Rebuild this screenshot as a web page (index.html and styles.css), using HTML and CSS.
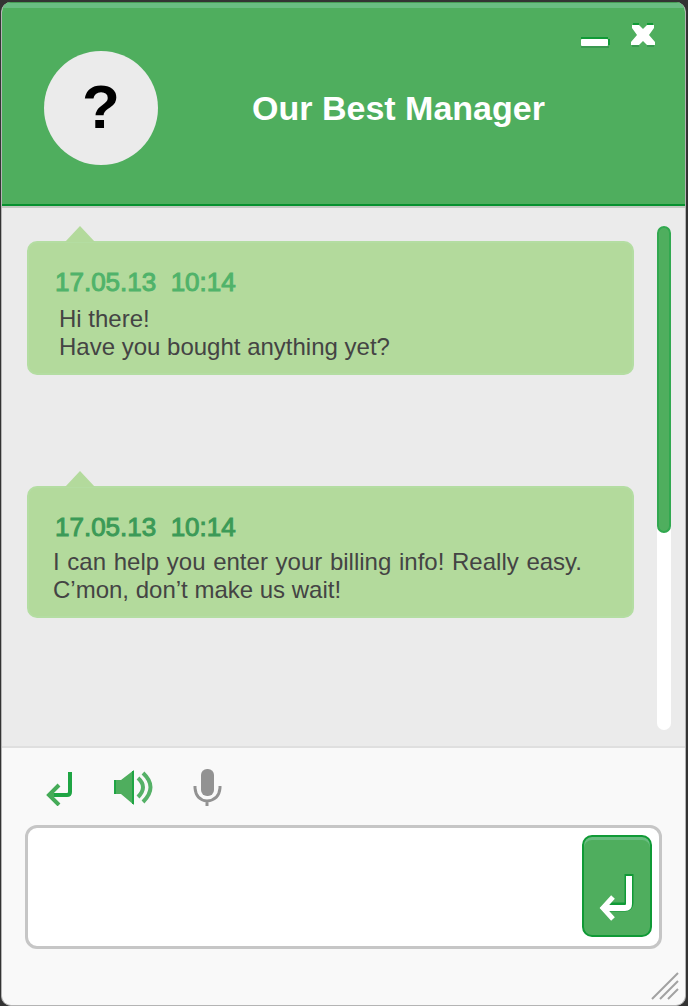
FILE: index.html
```html
<!doctype html>
<html lang="en">
  <head>
    <meta charset="UTF-8" />
    <meta name="viewport" content="width=device-width, initial-scale=1.0" />
    <title>Our Best Manager</title>
    <link rel="stylesheet" href="styles.css">
  </head>
  <body>
    <div class="chat-window">
      <header class="chat-header">
        <div class="window-controls">
          <button type="button" aria-label="Minimize">
            <svg width="32" height="26" viewBox="0 0 32 26">
              <path d="M1 17h27M29 18v6" fill="none" stroke="#109a36" stroke-width="2" />
              <path d="M1 26h28" stroke="#3a9950" stroke-width="2" />
              <rect x="1" y="18" width="27" height="7" rx="1" fill="#fff" />
            </svg>
          </button>
          <button type="button" aria-label="Close">
            <svg width="26" height="26" viewBox="0 0 26 26">
              <path d="M3 3h6M17 3h6" stroke="#109a36" stroke-width="2" />
              <path d="M2 25h7M17 25h7" stroke="#3a9950" stroke-width="2" />
              <path d="M2 4h7l4 4 4-4h7v3l-5 7 6 7v3h-8l-4-4-4 4H1v-3l6-7-5-7z" fill="#fff" />
            </svg>
          </button>
        </div>
        <div class="avatar">?</div>
        <h1>Our Best Manager</h1>
      </header>

      <main class="chat-body">
        <div class="chat-messages">
          <article class="message">
            <time class="message-time" datetime="2013-05-17T10:14">17.05.13  10:14</time>
            <p class="message-text">Hi there!<br>Have you bought anything yet?</p>
          </article>
          <article class="message read">
            <time class="message-time" datetime="2013-05-17T10:14">17.05.13  10:14</time>
            <p class="message-text">I can help you enter your billing info! Really easy. C’mon, don’t make us wait!</p>
          </article>
        </div>
        <div class="scroll-track">
          <div class="scroll-thumb"></div>
        </div>
      </main>

      <footer class="chat-footer">
        <div class="toolbar">
          <button type="button" aria-label="New line">
            <svg width="28" height="38" viewBox="0 0 28 38">
              <path d="M24 4v20q0 3-3 3H6" fill="none" stroke="#1fa544" stroke-width="4" />
              <path d="M13 17L3 27l10 10" fill="none" stroke="#45ab58" stroke-width="4" />
              <path d="M1 27l7-6v12z" fill="#45ab58" />
            </svg>
          </button>
          <button type="button" aria-label="Sound">
            <svg width="40" height="38" viewBox="0 0 40 38">
              <path d="M1 12h7L21 2v35L8 26H1z" fill="#4fae5e" />
              <path d="M2 12v14M20 3v33" fill="none" stroke="#1fa544" stroke-width="2" />
              <path d="M25 10q10 9 0 19M30 5q15 14 0 29" fill="none" stroke="#55b167" stroke-width="4" />
            </svg>
          </button>
          <button type="button" aria-label="Microphone">
            <svg width="30" height="38" viewBox="0 0 30 38">
              <rect x="9" y="1" width="13" height="27" rx="6" fill="#929292" />
              <path d="M3 18v2q1 12 12 13q12-1 13-13v-2M15 33v5" fill="none" stroke="#929292" stroke-width="3" />
            </svg>
          </button>
        </div>
        <form class="input-form">
          <textarea aria-label="Message"></textarea>
          <button type="submit" class="send" aria-label="Send">
            <svg width="36" height="48" viewBox="0 0 36 48">
              <path d="M30 1v29q0 4-4 4H8" fill="none" stroke="#109a36" stroke-width="9" />
              <path d="M30 3v28q0 4-4 4H6" fill="none" stroke="#fff" stroke-width="6" />
              <path d="M14 24L4 35l10 11" fill="none" stroke="#fff" stroke-width="5" />
              <path d="M1 35l8-7v14z" fill="#fff" />
            </svg>
          </button>
        </form>
        <svg class="resize-grip" width="28" height="28" viewBox="0 0 28 28">
          <path d="M1 27L27 1M9 27L27 9M17 27l10-10" stroke="#a2a2a2" stroke-width="2" />
        </svg>
      </footer>
    </div>

    <script>
      document.querySelector('.input-form').addEventListener('submit', (e) => {
        e.preventDefault();
      });
    </script>
  </body>
</html>
```
FILE: styles.css
```css
* {
  margin: 0;
  padding: 0;
  box-sizing: border-box;
  font-family: "Liberation Sans", Arial, sans-serif;
}

body {
  background: #333;
  padding: 2px 2px 0 1px;
}

button {
  display: flex;
  background: none;
  border: none;
  cursor: pointer;
}

.chat-window {
  position: relative;
  min-height: calc(100vh - 2px);
  display: flex;
  flex-direction: column;
  background: #f9f9f9;
  border: solid #b4b4b4;
  border-width: 0 1px 1px;
  border-radius: 10px;
  overflow: hidden;
}

.chat-header {
  position: relative;
  display: flex;
  align-items: center;
  margin: 0 -1px;
  padding: 48px 43px 39px;
  background: #4fae5e;
  border-top: 1px solid #469c55;
  border-bottom: 2px solid #07912f;
  box-shadow: inset 0 5px #69bd82, 0 2px #c2c9c1;
}

.window-controls {
  position: absolute;
  top: 18px;
  right: 30px;
  display: flex;
  gap: 18px;
}

.window-controls svg {
  overflow: visible;
}

.avatar {
  width: 114px;
  height: 114px;
  border-radius: 50%;
  display: flex;
  align-items: center;
  justify-content: center;
  padding-bottom: 4px;
  background: #ebebeb;
  color: #000;
  font-size: 62px;
  font-weight: bold;
}

.chat-header h1 {
  flex: 1;
  padding-right: 4px;
  color: #fff;
  font-size: 34px;
  text-align: center;
}

.chat-body {
  flex: 1;
  display: flex;
  gap: 23px;
  padding: 20px 14px 16px 25px;
  background: #ebebeb;
  border-bottom: 2px solid #dfdfdf;
}

.chat-messages {
  flex: 1;
  display: flex;
  flex-direction: column;
  gap: 111px;
  padding-top: 15px;
}

.message {
  position: relative;
  padding: 25px 24px 12px;
  background: #b3da9c;
  border: 2px solid #b4dda2;
  border-radius: 10px;
}

.message::before {
  content: "";
  position: absolute;
  top: -17px;
  left: 36px;
  border: solid transparent;
  border-width: 0 15px 16px;
  border-bottom-color: #b3da9c;
}

.message-time {
  display: block;
  padding-left: 2px;
  color: #50b36a;
  font-size: 26px;
  line-height: 28px;
  white-space: pre;
  -webkit-text-stroke: 1px;
}

.message-text {
  padding: 9px 6px 0;
  color: #444;
  font-size: 24px;
  line-height: 28px;
}

.read .message-time {
  color: #3b9a57;
}

.read .message-text {
  padding: 7px 26px 0 0;
  text-align: justify;
}

.scroll-track {
  width: 14px;
  background: #fff;
  border-radius: 7px;
}

.scroll-thumb {
  height: 61%;
  background: #4fae5e;
  border: 2px solid #31a84f;
  border-radius: 7px;
}

.chat-footer {
  padding: 20px 23px 56px;
}

.toolbar {
  display: flex;
  gap: 39px;
  padding: 0 21px;
}

.input-form {
  display: flex;
  margin-top: 19px;
  padding: 7px 7px 9px;
  background: #fff;
  border: 3px solid #c6c6c6;
  border-radius: 12px;
}

.input-form textarea {
  flex: 1;
  min-width: 0;
  padding: 8px;
  border: none;
  outline: none;
  resize: none;
  background: none;
  font-size: 24px;
}

.send {
  width: 70px;
  height: 102px;
  align-items: flex-end;
  justify-content: center;
  padding-bottom: 14px;
  background: #4fae5e;
  border: 2px solid #109a36;
  border-radius: 10px;
  box-shadow: inset 0 3px #6abc80;
}

.resize-grip {
  position: absolute;
  right: 6px;
  bottom: 5px;
}
```
